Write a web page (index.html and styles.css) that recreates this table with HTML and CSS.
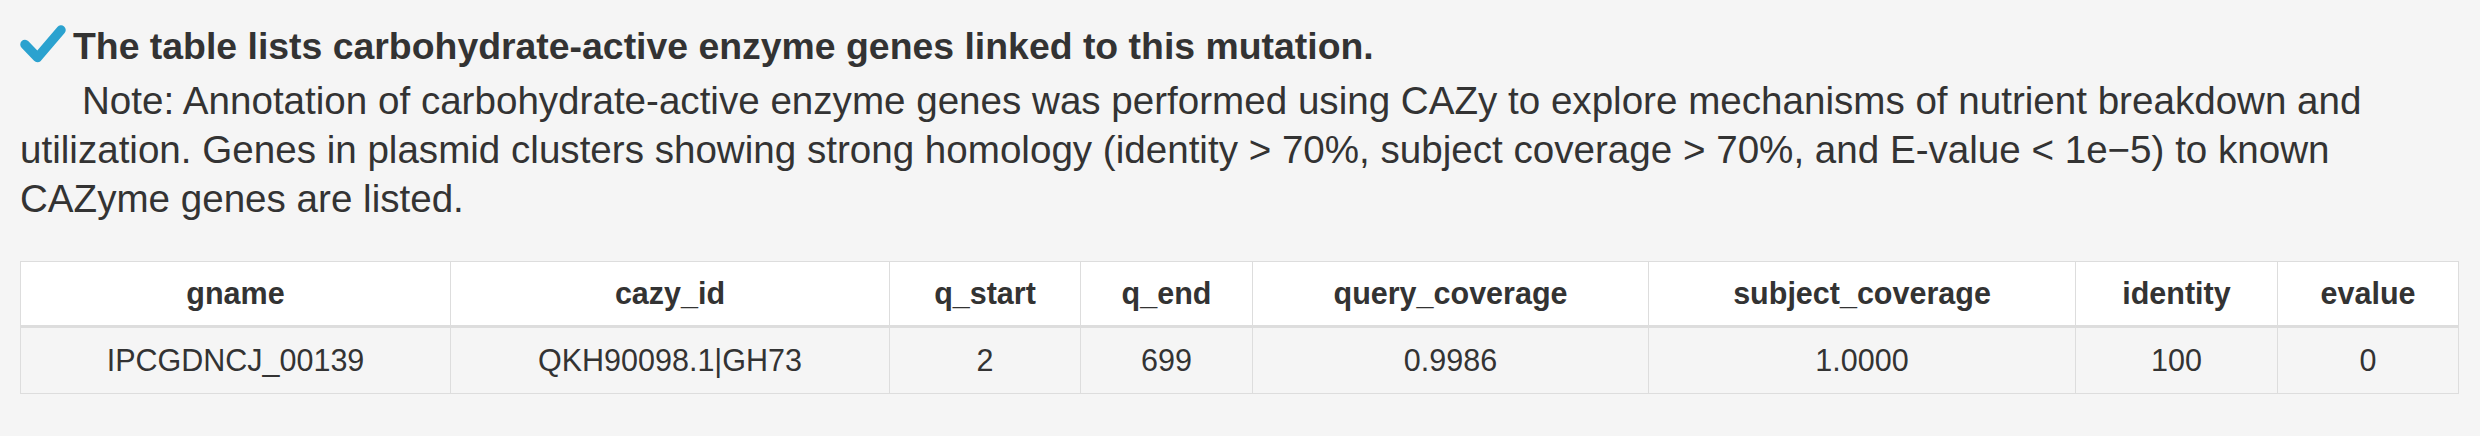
FILE: index.html
```html
<!DOCTYPE html>
<html lang="en">
<head>
  <meta charset="UTF-8">
  <title>CAZy annotation</title>
  <link rel="stylesheet" href="styles.css">
</head>
<body>
  <div class="panel">
    <h3 class="title">
      <svg class="ok" viewBox="0 0 46 38" width="46" height="38" aria-hidden="true">
        <polyline points="5,19.5 17.5,32.5 41,5" />
      </svg>
      The table lists carbohydrate-active enzyme genes linked to this mutation.
    </h3>
    <p class="note">Note: Annotation of carbohydrate-active enzyme genes was performed using CAZy to explore mechanisms of nutrient breakdown and utilization. Genes in plasmid clusters showing strong homology (identity &gt; 70%, subject coverage &gt; 70%, and E-value &lt; 1e&minus;5) to known CAZyme genes are listed.</p>

    <table class="result">
      <colgroup>
        <col class="c-gname">
        <col class="c-cazy">
        <col class="c-qstart">
        <col class="c-qend">
        <col class="c-qcov">
        <col class="c-scov">
        <col class="c-ident">
        <col class="c-eval">
      </colgroup>
      <thead>
        <tr>
          <th>gname</th>
          <th>cazy_id</th>
          <th>q_start</th>
          <th>q_end</th>
          <th>query_coverage</th>
          <th>subject_coverage</th>
          <th>identity</th>
          <th>evalue</th>
        </tr>
      </thead>
      <tbody>
        <tr>
          <td>IPCGDNCJ_00139</td>
          <td>QKH90098.1|GH73</td>
          <td>2</td>
          <td>699</td>
          <td>0.9986</td>
          <td>1.0000</td>
          <td>100</td>
          <td>0</td>
        </tr>
      </tbody>
    </table>
  </div>
</body>
</html>
```

FILE: styles.css
```css
:root {
  --clr-bg: #f5f5f5;
  --clr-text: #333333;
  --clr-line: #dddddd;
  --clr-ok: #2ba2cf;
}
*, *::before, *::after {box-sizing: border-box; margin: 0}
body {
  background: var(--clr-bg);
  color: var(--clr-text);
  font-family: "Liberation Sans", Arial, sans-serif;
}
.panel {
  padding: 20px 22px 41px 20px;
}
.title {
  display: flex;
  align-items: center;
  gap: 7px;
  font-size: 37.4px;
  font-weight: bold;
  line-height: 52px;
}
.ok {
  flex: none;
  margin-top: -4px;
}
.ok polyline {
  fill: none;
  stroke: var(--clr-ok);
  stroke-width: 9.5;
  stroke-linecap: round;
  stroke-linejoin: round;
}
.note {
  margin-top: 4px;
  font-size: 38.6px;
  line-height: 49px;
  text-indent: 62px;
}
.result {
  margin-top: 38px;
  width: 2438px;
  table-layout: fixed;
  border-collapse: collapse;
  font-size: 30.5px;
  text-align: center;
}
.c-gname {width: 430px}
.c-cazy {width: 439px}
.c-qstart {width: 191px}
.c-qend {width: 172px}
.c-qcov {width: 396px}
.c-scov {width: 427px}
.c-ident {width: 202px}
.c-eval {width: 181px}
.result th,
.result td {
  border: 1px solid var(--clr-line);
  padding: 0 8px;
}
.result th {
  height: 65px;
  background: #ffffff;
  border-bottom-width: 3px;
  font-weight: bold;
}
.result td {
  height: 67px;
  background: var(--clr-bg);
}
```
